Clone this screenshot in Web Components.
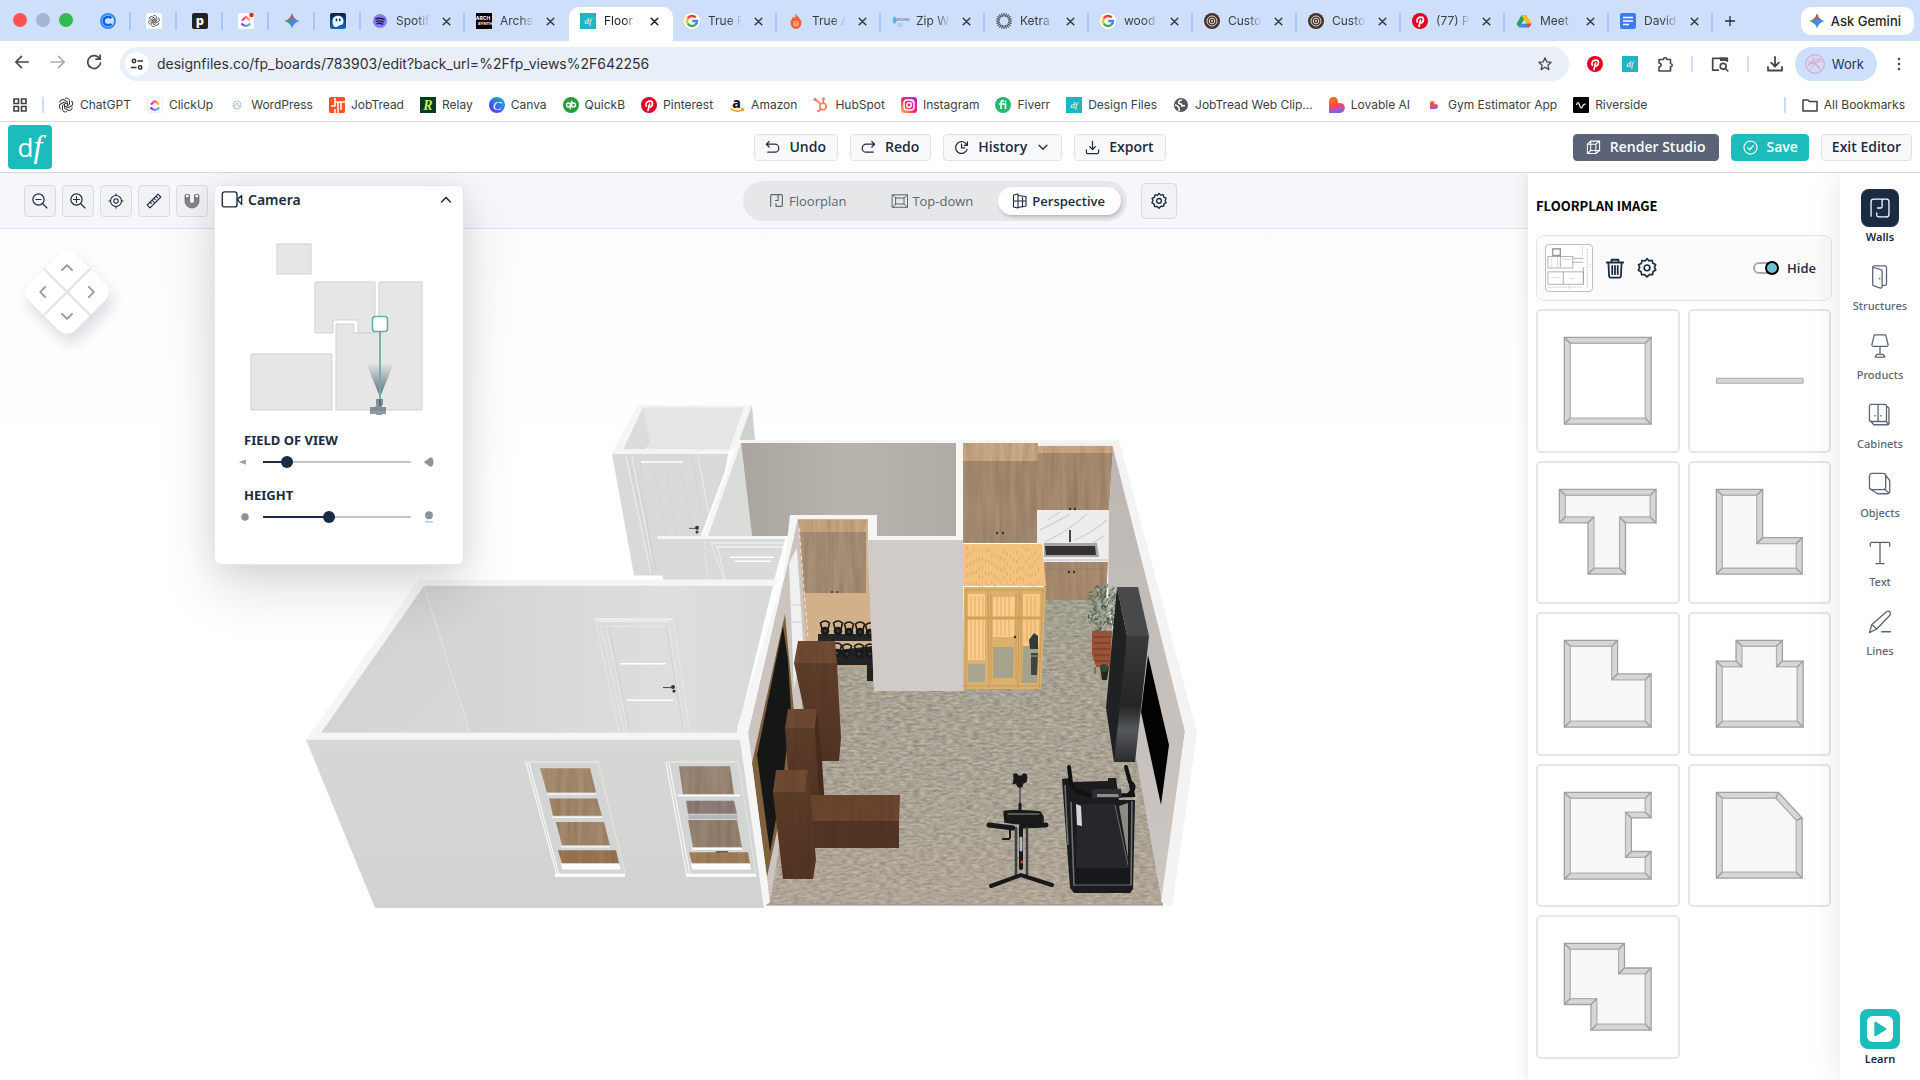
<!DOCTYPE html>
<html lang="en">
<head>
<meta charset="utf-8">
<title>Floor plan editor</title>
<style>
html,body{margin:0;height:100%}
body{font-family:"Noto Sans","Open Sans",sans-serif;color:#1b2b42;background:#fff;overflow:hidden}
editor-page{height:100vh}
</style>
</head>
<body>
<editor-page></editor-page>
<script>
const define = (tag, css, render, ready) => customElements.define(tag, class extends HTMLElement {
  connectedCallback() {
    if (this.shadowRoot) return;
    const root = this.attachShadow({ mode: 'open' });
    const t = document.createElement('template');
    t.innerHTML = `<style>*{box-sizing:border-box}button{font:inherit;color:inherit;border:0;background:none;padding:0;margin:0;cursor:pointer}a{color:inherit;text-decoration:none}${css}</style>${render(this)}`;
    root.append(t.content.cloneNode(true));
    if (ready) ready(this, root);
  }
});
const txt = (x, y, s, size, fill, extra = '') => `<text x="${x}" y="${y}" font-size="${size}" fill="${fill}" text-anchor="middle" ${extra}>${s}</text>`;
const line = (d, w = 1.5, extra = '') => `<path d="${d}" fill="none" stroke="currentColor" stroke-width="${w}" stroke-linecap="round" stroke-linejoin="round" ${extra}/>`;
const dfLogo = `<rect width="16" height="16" fill="#1fb5c3"/>${txt(8,11,'df',9,'#fff','font-family="Liberation Serif" font-style="italic"')}`;
const spark = `<linearGradient id="g" x1="0" x2="1" y1="0" y2="1"><stop offset=".1" stop-color="#34a853"/><stop offset=".4" stop-color="#4285f4"/></linearGradient><linearGradient id="h" x1="0" x2="1"><stop offset="0" stop-color="#fbbc04"/><stop offset=".2" stop-color="#34a853"/><stop offset=".5" stop-color="#34a853" stop-opacity="0"/></linearGradient><linearGradient id="k" x1="0" x2="0" y1="0" y2="1"><stop offset=".15" stop-color="#ea4335"/><stop offset=".5" stop-color="#ea4335" stop-opacity="0"/></linearGradient>`+['g','h','k'].map(i=>`<path d="M8 .5Q9.500 6.500 15.500 8Q9.500 9.500 8 15.500Q6.500 9.500 .5 8Q6.500 6.500 8 .5Z" fill="url(#${i})"/>`).join('');
const flower = `<g fill="none" stroke="#333" stroke-width="1">${[0,60,120,180,240,300].map(a=>`<path d="M7 1.500a3 3 0 0 1 4.500 2v4L8 9.800" transform="rotate(${a} 8 8)"/>`).join('')}</g>`;
const clickup = `<linearGradient id="a"><stop stop-color="#ff02f0"/><stop offset="1" stop-color="#ffc800"/></linearGradient><linearGradient id="b"><stop stop-color="#8930fd"/><stop offset="1" stop-color="#49ccf9"/></linearGradient><path d="M4 7.500L8 4l4 3.500" fill="none" stroke="url(#a)" stroke-width="2.200"/><path d="M3.500 10.500Q8 15.500 12.500 10.500" fill="none" stroke="url(#b)" stroke-width="2.200"/>`;
const target = `<circle cx="8" cy="8" r="8" fill="#44322c"/><g fill="none" stroke="#e5dbd6"><circle cx="8" cy="8" r="5"/><circle cx="8" cy="8" r="2.800"/></g><circle cx="8" cy="8" r="1" fill="#e5dbd6"/>`;
const pin = `<circle cx="8" cy="8" r="8" fill="#e60023"/><path d="M7 13.500l1.600-6.500M5.300 9C3 4.500 11.500 2 11.500 6.500c0 3.500-3 4.200-3.800 2.800" fill="none" stroke="#fff" stroke-width="1.700" stroke-linecap="round"/>`;
const heart = (k) => `<linearGradient id="l" x1=".4" x2=".6" y1="0" y2="1"><stop offset=".2" stop-color="#ff6a1a"/><stop offset=".55" stop-color="#fb3f6f"/><stop offset="1" stop-color="#5a72ff"/></linearGradient><path transform="translate(${8-8*k} ${8-8*k}) scale(${k})" d="M0 4.500C0 -1.500 9 -1.500 9 4.500V6h2c7 0 6 10 0 10H0z" fill="url(#l)"/>`;
const gear = line('M8 1.200l1.500 1.600 2.200-.4.500 2.200 2.100.900-.900 2 1 2-2 1.100-.300 2.200-2.200-.1L8 14.500l-1.700-1.700-2.200.1-.400-2.200-2-1.100 1-2-.900-2 2.100-.900.500-2.200 2.200.4z',1.200)+`<circle cx="8" cy="7.900" r="2.100" fill="none" stroke="currentColor" stroke-width="1.200"/>`;
const plan = 'M2.500 13.500V3.500a1 1 0 0 1 1-1h9a1 1 0 0 1 1 1v9a1 1 0 0 1-1 1H7.500M7.500 13.500v-2.500M9.500 2.500v5.500H7';
const ICONS = {
  calendly:`<circle cx="8" cy="8" r="7" fill="none" stroke="#2f8cff" stroke-width="2"/><path d="M11.300 5.300a4.300 4.300 0 1 0 0 5.400" fill="none" stroke="#0560ef" stroke-width="2.600"/>`,
  gptw:`<rect width="16" height="16" rx="2" fill="#fff"/><g transform="translate(1.600 1.600) scale(.8)">${flower}</g>`, gpt:flower,
  p:`<rect width="16" height="16" rx="2" fill="#222"/>${txt(8,12,'p',13,'#fff','font-weight="800" font-family="Noto Sans"')}`,
  clickdot:`<rect width="16" height="16" rx="2" fill="#fff"/>${clickup}<circle cx="13.500" cy="2" r="2.200" fill="#fb1d1d"/>`,
  clickup:`<rect x=".5" y=".5" width="15" height="15" rx="2" fill="#fff" stroke="#eee"/>${clickup}`,
  gemini:spark,
  ghost:`<linearGradient id="q" x2="0" y2="1"><stop stop-color="#072248"/><stop offset="1" stop-color="#1769bd"/></linearGradient><rect width="16" height="16" rx="2" fill="url(#q)"/><path d="M2.500 8c0-7 11-7 11 0 0 3-1 4-3 4l-4 2c-3 0-4-2-4-6z" fill="#e8f5fc"/><g fill="#12335c"><ellipse cx="6.500" cy="7" rx=".9" ry="1.400"/><ellipse cx="9.800" cy="7" rx=".9" ry="1.400"/></g>`,
  spotify:`<circle cx="8" cy="8" r="7" fill="#887bf5"/><g fill="none" stroke="#1c1a3c" stroke-linecap="round" stroke-width="1.400"><path d="M4 5.800c3-.8 6-.5 8.200.8M4.500 8.300c2.500-.7 5-.4 6.900.700M5 10.600c2-.5 4-.3 5.500.600"/></g>`,
  arch:`<rect width="16" height="16" fill="#000"/>${txt(7,7,'ARCH',5,'#fff','font-weight="700" font-family="Inter"')}${txt(9,12,'SYNTH',4,'#fff','font-weight="700" font-family="Inter"')}`,
  df:dfLogo,
  google:`<circle cx="8" cy="8" r="8" fill="#fff"/><g fill="none" stroke-width="2.400"><path d="M11.700 4.600A5 5 0 0 0 3.700 5.500" stroke="#ea4335"/><path d="M3.700 5.500a5 5 0 0 0 0 5" stroke="#fbbc04"/><path d="M3.700 10.500a5 5 0 0 0 7.500 1.300" stroke="#34a853"/><path d="M11.200 11.800A5 5 0 0 0 13 8H8.200" stroke="#4285f4"/></g>`,
  flame:`<path d="M8 0c0 3 5.500 5 5.500 10a5.500 6 0 0 1-11 0c0-3 2-4 2.500-6.500L7 5z" fill="#ee6432"/><rect x="5.500" y="8" width="5" height="5" rx="1" fill="#f8b9a1"/><path d="M6.500 9.500h3M6.500 11h3" stroke="#ee6432"/>`,
  zip:`<path d="M2.500 2.500q-4 7 0 8.500 4-1.500 0-8.500" fill="#5bb9ec"/>${txt(10,7.5,'DRONN',4,'#8490aa','font-family="Inter" font-weight="700"')}<path d="M5 10h6v4H6z" fill="#a3d4f0"/>`,
  ketra:`<g stroke="#3c4043" stroke-width="1.100">${Array.from({length:20},(_,i)=>`<path d="M8 0v3.500" transform="rotate(${i*18} 8 8)"/>`).join('')}</g>`,
  target, pinterest:pin,
  drive:`<path d="M5.500 2h5l5 9h-5z" fill="#fbbc04"/><path d="M5.500 2L8 6.500 3 14.500.5 11z" fill="#1fa463"/><path d="M5.500 10.800h10L13 14.500H3z" fill="#4285f4"/><path d="M11 10.800h4.500L13 14.500z" fill="#ea4335"/>`,
  docs:`<rect width="16" height="16" rx="2" fill="#3b7cf0"/><path d="M3 4.500h10M3 8h10M3 11.500h6" stroke="#fff" stroke-width="1.600"/>`,
  wp:`<circle cx="8" cy="8" r="4" fill="none" stroke="#9cc9dd"/><path d="M5 9l3-3 3 4" fill="none" stroke="#f0a0a0"/>`,
  jobtread:`<rect width="16" height="16" rx="1.500" fill="#ff5126"/><path d="M6 1v8H2M6 12V16M9 16V5h7M12 5v8M6 5h2" stroke="#fff" stroke-width="1.500" fill="none"/>`,
  relay:`<rect width="16" height="16" fill="#063d22"/>${txt(8,13,'R',14,'#c8ef5a','font-style="italic" font-weight="700" font-family="Liberation Serif"')}`,
  canva:`<linearGradient id="c" x1="0" y1="1" x2="1" y2="0"><stop stop-color="#6420ff"/><stop offset="1" stop-color="#00c4cc"/></linearGradient><circle cx="8" cy="8" r="8" fill="url(#c)"/>${txt(8,12.5,'C',13,'#fff','font-style="italic" font-family="Liberation Serif"')}`,
  qb:`<circle cx="8" cy="8" r="8" fill="#2b9c3f"/><g fill="none" stroke="#fff" stroke-width="1.300"><circle cx="5.500" cy="8" r="2"/><circle cx="10.500" cy="8" r="2"/><path d="M7.300 5.800v6.500M8.700 3.700v6.500"/></g>`,
  amazon:`${txt(7.5,10.5,'a',14,'#111','font-weight="800" font-family="Noto Sans"')}<path d="M1.500 11.500c4 3.500 9 3.500 12 1.200M12 11.800l2.500.2-.8 2.300" fill="none" stroke="#ff9900" stroke-width="1.500"/>`,
  hubspot:`<g fill="none" stroke="#ff7a59" stroke-width="1.600"><circle cx="10" cy="9.500" r="3.200"/><path d="M8 7L2 2.500M10.300 6V2M7.500 12L5.500 14.500"/></g><g fill="#ff7a59"><circle cx="2" cy="2.200" r="1.500"/><circle cx="10.500" cy="1.800" r="1.500"/><circle cx="5.500" cy="14" r="1.300"/></g>`,
  instagram:`<linearGradient id="i" x1="0" y1="1" x2="1" y2="0"><stop stop-color="#ffc63b"/><stop offset=".45" stop-color="#fb2667"/><stop offset="1" stop-color="#a72ce6"/></linearGradient><rect width="16" height="16" rx="3" fill="url(#i)"/><g fill="none" stroke="#fff" stroke-width="1.400"><rect x="3" y="3" width="10" height="10" rx="3"/><circle cx="8" cy="8" r="2.300"/></g><circle cx="11" cy="5" r=".8" fill="#fff"/>`,
  fiverr:`<circle cx="8" cy="8" r="8" fill="#24ba6d"/><path d="M4 7h6.500v5M6 12V6c0-2 1-2.500 3-2.300" fill="none" stroke="#fff" stroke-width="1.600"/><circle cx="10.500" cy="4.500" r=".9" fill="#fff"/>`,
  globe:`<circle cx="8" cy="8" r="7" fill="#54585d"/><path d="M9 3c-3 0-4 2-3 3.500 2 0 3 .5 3 2.500l3-.5M2 8c2 0 3 1 4 2.500V14" fill="none" stroke="#fff" stroke-width="1.600"/>`,
  heart:heart(1), heartS:heart(.5),
  riverside:`<rect width="16" height="16" rx="1" fill="#000"/><path d="M3.500 8q1.500-5 3 0t3 1.500 3-2" fill="none" stroke="#fff" stroke-width="1.200"/>`,
  close:line('M4.500 4.500l7 7M11.500 4.500l-7 7',1.600), plus:line('M8 2v12M2 8h12',1.700),
  back:line('M13.500 8H2.500M7.500 3L2.500 8l5 5',1.500), fwd:line('M2 8h11.500M8.500 3l5 5-5 5',1.500),
  reload:line('M13 5.200A5.700 5.700 0 1 0 13.700 9M13.500 1.800v3.700H9.800',1.500),
  tune:`<g fill="none" stroke="#333" stroke-width="1.500"><circle cx="5" cy="5" r="1.700"/><path d="M8.500 5H14M2 11.500h5.500"/><circle cx="11.200" cy="11.500" r="1.700"/></g>`,
  star:line('M8 1.800l1.800 4.100 4.400.4-3.300 2.900 1 4.400L8 11.300l-3.900 2.300 1-4.400L1.800 6.300l4.400-.4z',1.300),
  puzzle:line('M2 3.500h4.500a1.700 1.700 0 0 1 3.400 0H13.500V7.500a1.700 1.700 0 0 1 0 3.400V15H2V11a2 2 0 0 0 0-4z',1.600),
  lens:line('M6.500 13.500H1.500V3h13v2.500',1.500)+`<path d="M8 2.300h6.500v3H8z" fill="currentColor"/><circle cx="10.800" cy="10" r="2.600" fill="none" stroke="currentColor" stroke-width="1.500"/>`+line('M12.800 12l2.200 2.200',1.500),
  download:line('M8 1v9M4.200 6.700L8 10.500l3.800-3.800M1 11v3.500h14V11',1.800),
  avatar:`<circle cx="8" cy="8" r="7.500" fill="#dbd8f3" stroke="#b495bd" stroke-width=".6"/><path d="M2 10q6-8 12-5M4 13q5-8 9-7M3 6q6 1 9 7M6 2q1 6 6 9M2 8q8 0 10-5" fill="none" stroke="#c89ab8" stroke-width=".5"/>`,
  dots:`<g fill="currentColor"><circle cx="8" cy="3" r="1.300"/><circle cx="8" cy="8" r="1.300"/><circle cx="8" cy="13" r="1.300"/></g>`,
  apps:`<g fill="none" stroke="currentColor" stroke-width="1.600"><path d="M2 2h4.500v4.500H2zM9.500 2H14v4.500H9.500zM2 9.500h4.500V14H2zM9.500 9.500H14V14H9.500z"/></g>`,
  folder:line('M1 3h5l1.500 1.500H15V14H1z',1.500),
  undo:line('M4.500 1.500L1.500 4.500h9a4.200 4.200 0 0 1 0 8.500H3M1.500 4.500L4.500 7.500',1.300), redo:line('M11.500 1.500L14.500 4.500H5.500a4.200 4.200 0 0 0 0 8.500H13M14.500 4.500L11.500 7.500',1.300),
  history:line('M13.800 5.500A6.300 6.300 0 1 0 14 10M14.300 2v3.700h-3.500M8 4.500V8.500h3.500',1.300), down:line('M3.500 6L8 10.500 12.500 6',1.500), up:line('M3.500 10L8 5.500 12.500 10',1.500),
  left:line('M10 3.500L5.500 8l4.500 4.500',1.500), right:line('M6 3.500l4.500 4.500L6 12.500',1.500),
  export:line('M8 1.500v8.500M5 7.200L8 10.200l3-3M1.500 10.500v2.500a1.500 1.500 0 0 0 1.500 1.500h10a1.500 1.500 0 0 0 1.500-1.500v-2.500',1.300),
  cube:line('M1.500 4.500h9v10h-9zM5 1.200h9.500v10H5zM1.500 4.500L5 1.200M10.500 4.500l4-3.300M1.500 14.500L5 11.200M10.500 14.500l4-3.300',1.100),
  check:`<circle cx="8" cy="8" r="7" fill="none" stroke="currentColor" stroke-width="1.200"/>`+line('M5 8.200l2.200 2.200L11 6',1.300),
  zoomout:line('M11 11l4 4M4 6.500h5',1.100)+`<circle cx="6.500" cy="6.500" r="5.600" fill="none" stroke="currentColor" stroke-width="1.200"/>`,
  zoomin:line('M11 11l4 4M3.500 6.500h6M6.500 3.500v6',1.100)+`<circle cx="6.500" cy="6.500" r="5.600" fill="none" stroke="currentColor" stroke-width="1.200"/>`,
  center:`<g fill="none" stroke="currentColor" stroke-width="1.100"><circle cx="8" cy="8" r="5.500"/><circle cx="8" cy="8" r="2.200"/><path d="M8 .5v2.500M8 13v2.500M.5 8H3M13 8h2.500"/></g>`,
  ruler:line('M1.200 12L12 1.200 14.800 4 4 14.800zM4 9.200l1.300 1.300M6 7.200l2 2M8 5.200l1.300 1.300M10 3.200l1.500 1.500',1.100),
  magnet:`<path d="M1 2v6a7 7 0 0 0 14 0V2h-4.500v6a2.500 2.500 0 0 1-5 0V2z" fill="#858585" stroke="#666" stroke-width=".7"/><path d="M1.500 1.500H5v3H1.500zM11 1.500h3.500v3H11z" fill="#fff" stroke="#666" stroke-width=".7"/>`,
  plan:line(plan,1.100),
  topdown:line('M.5 1.800h15v12.500H.5zM4 5h8v6H4zM.5 1.800L4 5M15.500 1.800L12 5M.5 14.300L4 11M15.500 14.300L12 11',1),
  persp:line('M1.500 2l4.500-1v14l-4.500-1zM6 2.500l8 1v9.500l-8 1.500M10.500 3v11M1.500 8H14',1.100),
  camera:line('M3 1.500h8a1.800 1.800 0 0 1 1.800 1.800v8.400A1.800 1.800 0 0 1 11 13.500H2.800A1.800 1.800 0 0 1 1 11.700V3.300a1.800 1.800 0 0 1 1.800-1.800M13 7.500l3.500-3v7z',1.100),
  gear,
  trash:line('M2 4h12M3.200 4l.5 9.800a1.200 1.200 0 0 0 1.200 1.200h6.200a1.200 1.200 0 0 0 1.200-1.200L12.800 4M5.500 3.500V2h5v1.500M6 6.500v6M8 6.500v6M10 6.500v6',1.300),
  fovS:`<path d="M1 8l8-3v6z" fill="#98a0aa"/>`, fovL:`<path d="M1 8L10 1.500q4 1 4 6.500t-4 6.500z" fill="#8a939e"/>`,
  dotG:`<circle cx="8" cy="8" r="5" fill="#8a939e"/>`, person:`<circle cx="8" cy="6" r="4.500" fill="#8a939e"/><path d="M3.500 13.500h9" stroke="#b9bfc6" stroke-width="1.500"/>`,
  walls:line('M2.500 13V4a1.500 1.500 0 0 1 1.500-1.500h8A1.500 1.500 0 0 1 13.500 4v8a1.500 1.500 0 0 1-1.500 1.500H7a1.200 1.200 0 0 1-1-1.200V11M6.500 8H8.300a1 1 0 0 0 1-1V2.500',.8),
  structures:line('M3.500 2.200a1 1 0 0 1 1-1h6.500a1 1 0 0 1 1 1v10a1 1 0 0 1-1 1H9.500M3.500 2L8.500 3.500a1 1 0 0 1 .8 1v9.500a.8.8 0 0 1-1 .8L4.200 13.500a1 1 0 0 1-.7-1z',.8)+`<circle cx="7.800" cy="9" r=".5" fill="currentColor"/>`,
  products:line('M4.500 1.200h7l1.500 6a1 1 0 0 1-1 1H4a1 1 0 0 1-1-1zM8 8.200v5M6 13.200h4l1 1.600H5z',.8),
  cabinets:line('M1.500 2.500a1 1 0 0 1 1-1h8.500a1 1 0 0 1 1 1v8.500a1 1 0 0 1-1 1H2.500a1 1 0 0 1-1-1zM6.800 1.500v10.500M12 2.500l1.500 1.200V13a1 1 0 0 1-1 1H4.200l-2-2.300M11.700 11.700l1.500 2',.8)+`<circle cx="5" cy="8.500" r=".5" fill="currentColor"/><circle cx="8.600" cy="8.500" r=".5" fill="currentColor"/>`,
  objects:line('M1.500 3a1.500 1.500 0 0 1 1.500-1.500h7A1.500 1.500 0 0 1 11.500 3v7A1.500 1.500 0 0 1 10 11.500H3A1.500 1.500 0 0 1 1.500 10zM11.500 2.500l2.500 3.500v6.500a1.500 1.500 0 0 1-1.500 1.500H6.500L2.200 11.200M11 11.200l2.500 2.400',.8),
  text:line('M2 3.800V2.500a1 1 0 0 1 1-1h10a1 1 0 0 1 1 1v1.300M8 1.500v13M5.500 14.500h5',.8),
  lines:line('M1.500 14.500l1.500-5L12 1.700a1.500 1.500 0 0 1 2.200 2L6 12.300zM3 9.500l3 2.800M9 14h5.500',.8),
  learn:`<rect width="16" height="16" rx="3.500" fill="#fff"/><path d="M5 4v8l6.500-4z" fill="#1cbbbc" stroke="#1cbbbc" stroke-linejoin="round"/>`
};
define('ui-icon', `:host{display:inline-flex;flex:none}svg{display:block;overflow:visible}`, el => {
  const s = el.getAttribute('size') || 16;
  return `<svg width="${s}" height="${s}" viewBox="0 0 16 16" aria-hidden="true">${ICONS[el.getAttribute('name')] || ''}</svg>`;
});
const ic = (n, s = 16) => `<ui-icon name="${n}" size="${s}"></ui-icon>`;

/* ---- browser chrome ---- */
define('pinned-tab', `:host{display:flex;box-sizing:border-box;align-items:center;width:46px;height:18px;padding-left:2px;border-right:2px solid #a5c6fa}button{display:flex;width:100%;justify-content:center}`,
  el => `<button aria-label="${el.getAttribute('icon')}">${ic(el.getAttribute('icon'))}</button>`);
define('browser-tab', `:host{display:flex;box-sizing:border-box;position:relative;align-items:center;width:104px;height:34px;padding:0 11px 6px;color:#3c4043}
:host([active]){background:#fff;border-radius:10px 10px 0 0;color:#1f1f1f}
:host(:not([plain]))::after{content:"";position:absolute;right:0;top:6px;height:18px;width:2px;background:#a5c6fa}
.t{display:flex;flex:1;min-width:0;gap:8px;align-items:center}
span{flex:1;text-align:left;white-space:nowrap;overflow:hidden;font-size:12px;line-height:16px;-webkit-mask:linear-gradient(90deg,#000 60%,transparent)}.x{display:flex;margin-left:9px}`,
  el => `<button class="t">${ic(el.getAttribute('icon'))}<span><slot></slot></span></button><button class="x" aria-label="Close">${ic('close',15)}</button>`);
define('tab-strip', `:host{display:flex;box-sizing:border-box;height:41px;padding:7px 6px 0 13px;background:#cddffb;font-family:Inter,sans-serif}
.lights{display:flex;gap:9px;padding-top:6px;width:72px}.lights i{width:14px;height:14px;border-radius:50%;background:#fe5152}.lights i:nth-child(2){background:#a2b4d2}.lights i:nth-child(3){background:#31bb51}
.pins{display:flex;padding-top:5px}.new{display:flex;height:28px;width:34px;align-items:center;justify-content:center}
.ask{display:flex;margin-left:auto;height:28px;border-radius:10px;background:#fff;align-items:center;gap:6px;padding:0 13px 0 8px;font-size:13px;font-weight:500;color:#1f1f1f}`,
  () => `<div class="lights"><i></i><i></i><i></i></div><div class="pins">${['calendly','gptw','p','clickdot','gemini','ghost'].map(n=>`<pinned-tab icon="${n}"></pinned-tab>`).join('')}</div>
  ${[['spotify','Spotify'],['arch','Archsy','plain'],['df','Floor P','active plain'],['google','True R'],['flame','True A'],['zip','Zip Wa'],['ketra','Ketra'],['google','wood'],['target','Custom'],['target','Custom'],['pinterest','(77) Pi'],['drive','Meet |'],['docs','David']].map(([i,t,a=''])=>`<browser-tab icon="${i}" ${a}>${t}</browser-tab>`).join('')}
  <button class="new" aria-label="New tab">${ic('plus',12)}</button><button class="ask">${ic('gemini')}Ask Gemini</button>`);
define('address-bar', `:host{display:flex;box-sizing:border-box;align-items:center;height:47px;padding:0 13px 2px 13px;color:#474747;font-family:Inter,sans-serif;background:#fff}
.nav{display:flex;gap:18px;width:107px}.nav button:nth-child(2){opacity:.45}
.box{display:flex;align-items:center;flex:1;height:34px;border-radius:17px;background:#e9eff9;padding:0 16px 0 5px}
.site{display:flex;width:24px;height:24px;border-radius:50%;background:#fff;align-items:center;justify-content:center}
input{flex:1;min-width:0;border:0;background:none;font:14px/20px Inter,sans-serif;color:#303236;padding:0 8px;outline:0}
.ext{display:flex;align-items:center;gap:19px;padding-left:18px}.sep{width:2px;height:16px;background:#c8dcfb;margin:0 -1px}
.ext button{display:flex}.ext .work{height:34px;border-radius:17px;background:#cddffb;align-items:center;gap:7px;padding:0 13px 0 10px;font-size:13px;color:#22375f;margin:0 -5px 0 -7px}`,
  () => `<div class="nav"><button aria-label="Back">${ic('back',18)}</button><button aria-label="Forward">${ic('fwd',18)}</button><button aria-label="Reload">${ic('reload',18)}</button></div>
  <div class="box"><span class="site">${ic('tune')}</span><input aria-label="Address" value="designfiles.co/fp_boards/783903/edit?back_url=%2Ffp_views%2F642256">${ic('star')}</div>
  <div class="ext"><button aria-label="Pinterest">${ic('pinterest')}</button><button aria-label="DesignFiles">${ic('df')}</button><button aria-label="Extensions">${ic('puzzle')}</button><i class="sep"></i><button aria-label="Lens">${ic('lens',18)}</button><i class="sep"></i><button aria-label="Downloads">${ic('download')}</button><button class="work">${ic('avatar',20)}Work</button><button aria-label="More">${ic('dots')}</button></div>`);
define('book-mark', `:host{display:flex}a{display:flex;align-items:center;gap:6px;font-size:12px;line-height:16px;white-space:nowrap}`,
  el => `<a href="#">${ic(el.getAttribute('icon'))}<slot></slot></a>`);
define('bookmarks-bar', `:host{display:flex;box-sizing:border-box;align-items:center;height:34px;padding:0 15px 0 12px;border-bottom:1px solid #d9dbde;background:#fff;color:#3c4043;font-family:Inter,sans-serif}
.list{display:flex;gap:16px;padding-left:14px}.sep{width:2px;height:16px;background:#c8dcfb;margin-left:14px}.all{margin-left:auto;display:flex;gap:16px;align-items:center}`,
  () => `${ic('apps')}<i class="sep"></i><div class="list">${[['gpt','ChatGPT'],['clickup','ClickUp'],['wp','WordPress'],['jobtread','JobTread'],['relay','Relay'],['canva','Canva'],['qb','QuickB'],['pinterest','Pinterest'],['amazon','Amazon'],['hubspot','HubSpot'],['instagram','Instagram'],['fiverr','Fiverr'],['df','Design Files'],['globe','JobTread Web Clip...'],['heart','Lovable AI'],['heartS','Gym Estimator App'],['riverside','Riverside']].map(([i,t])=>`<book-mark icon="${i}">${t}</book-mark>`).join('')}</div><div class="all"><i class="sep"></i><book-mark icon="folder">All Bookmarks</book-mark></div>`);

/* ---- editor header ---- */
define('app-button', `:host{display:flex}button{display:flex;align-items:center;gap:9px;height:27px;padding:0 11px 0 10px;border:1px solid #dfe1e4;border-radius:4px;background:#f9f9fa;font-size:14px;line-height:20px;font-weight:600;white-space:nowrap}
:host([tone=dark]) button{background:#5a6377;border-color:#5a6377;color:#fff;gap:9px;padding:0 13px 0 12px}:host([tone=teal]) button{background:#1cbbbc;border-color:#1cbbbc;color:#fff;gap:8px;padding:0 10px 0 11px}:host([tone=plain]) button{padding:0 10px}`,
  el => { const a = n => el.getAttribute(n); return `<button>${a('icon')?ic(a('icon'),15):''}<slot></slot>${a('after')?ic(a('after'),14):''}</button>`; });
define('app-header', `:host{display:grid;box-sizing:border-box;grid-template-columns:1fr auto 1fr;align-items:center;height:51px;padding:0 8px;background:#fff;border-bottom:1px solid #d3d7dc;font-family:"Open Sans",sans-serif}
.logo{display:block;width:44px;height:44px;border-radius:4px;background:#1cbbbc;color:#fff;text-align:center;font:500 26px/42px "Open Sans",sans-serif}.logo i{font-family:"Liberation Serif",serif;font-size:32px}
div{display:flex;gap:12px}.r{justify-content:flex-end}`,
  () => `<a class="logo" href="#">d<i>f</i></a><div><app-button icon="undo">Undo</app-button><app-button icon="redo">Redo</app-button><app-button icon="history" after="down">History</app-button><app-button icon="export">Export</app-button></div>
  <div class="r"><app-button tone="dark" icon="cube">Render Studio</app-button><app-button tone="teal" icon="check">Save</app-button><app-button tone="plain">Exit Editor</app-button></div>`);

/* ---- canvas toolbar ---- */
define('tool-button', `:host{display:flex}button{display:flex;width:32px;height:32px;align-items:center;justify-content:center;border:1px solid #d8dbdf;border-radius:4px;background:#f1f2f4}:host([large]) button{width:36px;height:36px}`,
  el => `<button aria-label="${el.getAttribute('icon')}">${ic(el.getAttribute('icon'), el.hasAttribute('large')?18:16)}</button>`);
define('view-switch', `:host{display:flex;box-sizing:border-box;height:40px;padding:6px;border-radius:20px;background:#e6e7e9;font-family:"Open Sans",sans-serif;font-size:13px;line-height:18px;font-weight:500;color:#5b6676}
button{display:flex;align-items:center;gap:4px;height:28px;border-radius:14px;padding:0 19px}button:nth-of-type(2){padding:0 25px 0 27px}button[aria-pressed=true]{background:#fff;color:#1b2b42;font-weight:600;box-shadow:1px 2px 3px #0003;padding:0 16px 0 14px}`,
  () => `<button>${ic('plan',17)}Floorplan</button><button>${ic('topdown')}Top-down</button><button aria-pressed="true">${ic('persp')}Perspective</button>`);
define('range-row', `:host{display:block;padding:0 24px 0 20px}label{display:block;padding-left:9px;font-size:13px;line-height:18px;font-weight:700}
div{display:flex;align-items:center;gap:8px;height:18px;margin-top:4px}ui-icon{width:20px;justify-content:center}
input{appearance:none;-webkit-appearance:none;flex:1;min-width:0;height:18px;margin:0;background:linear-gradient(90deg,#1b2b42 var(--p),#c3c3c3 var(--p)) center/100% 2px no-repeat}
input::-webkit-slider-thumb{-webkit-appearance:none;width:12px;height:12px;border-radius:50%;background:#1b2b42}`,
  el => `<label for="r"><slot></slot></label><div>${ic(el.getAttribute('from'),el.getAttribute('from')=='dotG'?12:14)}<input id="r" type="range" value="${el.getAttribute('value')}" style="--p:${el.getAttribute('value')}%">${ic(el.getAttribute('to'),el.getAttribute('to')=='person'?14:12)}</div>`);
define('camera-panel', `:host{display:block;box-sizing:border-box;border-radius:6px;background:#fff;border:1px solid #e5e7ea;box-shadow:0 24px 56px #0002,0 4px 30px #00000012;padding-bottom:38px}
header{display:flex;align-items:center;height:30px;padding:0 9px 2px 6px;gap:7px;font-size:14px;line-height:20px;font-weight:600}header button{display:flex;margin-left:auto}
svg{display:block;width:100%}range-row{margin-top:9px}range-row+range-row{margin-top:15px}`,
  () => `<header>${ic('camera',20)}Camera<button aria-label="Collapse">${ic('up')}</button></header>
  <svg viewBox="215 216 248 206"><defs><linearGradient id="c" x2="0" y2="1"><stop stop-color="#1b2b42" stop-opacity="0"/><stop offset="1" stop-color="#1b2b42" stop-opacity=".7"/></linearGradient></defs>
  <g fill="#e6e6e6" stroke="#d0d0d0"><path d="M277 244h34v30h-34zM315 282h60v51h-17v-13h-25v13h-18zM251 354h81v56h-81z"/><path d="M379 282h43v128h-86v-86h18v9h25z"/></g>
  <path d="M366 363h28l-14 34z" fill="url(#c)"/><path d="M380 332v74" stroke="#63b3aa" stroke-width="2" opacity=".9"/><rect x="372.500" y="316.500" width="15" height="15" rx="3" fill="#fff" stroke="#5fb0a8" stroke-width="1.600"/><path d="M376 399h7v6h-1v2h4v7h-4v1h-6v-1h-6v-7h5l2-2h-1z" fill="#1b2b42" opacity=".48"/></svg>
  <range-row value="13" from="fovS" to="fovL">FIELD OF VIEW</range-row><range-row value="44" from="dotG" to="person">HEIGHT</range-row>`);
define('canvas-toolbar', `:host{display:grid;box-sizing:border-box;grid-template-columns:1fr auto 1fr;align-items:center;position:relative;z-index:1;height:56px;padding:0 24px;background:#f6f7fa;border-bottom:1px solid #dfe2e5}
div{display:flex;align-items:center;gap:6px}.m{gap:14px}camera-panel{position:absolute;left:214px;top:12px;width:250px}`,
  () => `<div>${['zoomout','zoomin','center','ruler','magnet'].map(n=>`<tool-button icon="${n}"></tool-button>`).join('')}</div><div class="m"><view-switch></view-switch><tool-button large icon="gear"></tool-button></div><camera-panel></camera-panel>`);

/* ---- 3D scene ---- */
const pg = (pts, fill, extra = '') => `<polygon points="${pts}" fill="${fill}" ${extra}/>`;
const ln = (d, c, w = 1, e = '') => `<path d="${d}" fill="none" stroke="${c}" stroke-width="${w}" ${e}/>`;
const bell = (x, y) => `<path d="M${x-3} ${y-2}l-1.500-6q4.500-4 9 0l-1.500 6" fill="none" stroke="#16181a" stroke-width="1.600"/><circle cx="${x}" cy="${y}" r="4.300" fill="#17191a"/><circle cx="${x}" cy="${y}" r="1.400" fill="#3b3d3f"/>`;
const leaves = () => { let s = '', k = 7; const r = () => (k = (k * 16807) % 2147483647) / 2147483647;
  for (let i = 0; i < 190; i++) { const a = r() * 6.28, d = Math.sqrt(r()), x = 1102 + Math.cos(a) * 15 * d + (r() - .3) * 8, y = 611 + Math.sin(a) * 26 * d; s += `<ellipse cx="${x.toFixed(1)}" cy="${y.toFixed(1)}" rx="2.200" ry=".9" transform="rotate(${(r()*180)|0} ${x.toFixed(1)} ${y.toFixed(1)})" fill="${['#64735f','#8b978a','#4e5c50','#a9b3a8','#75836f'][i%5]}"/>`; } return s; };
const scene = () => `<svg viewBox="0 229 1528 851" preserveAspectRatio="xMidYMid meet" role="img" aria-label="Perspective view of the gym">
<defs>
<filter id="carpet" x="0" y="0" width="100%" height="100%" color-interpolation-filters="sRGB"><feTurbulence type="fractalNoise" baseFrequency=".15 .42" numOctaves="3" seed="4" result="n"/><feColorMatrix in="n" values=".36 .06 0 0 .45  .34 .07 0 0 .43  .32 0 .08 0 .38  0 0 0 0 1" result="c"/><feComposite in="c" in2="SourceGraphic" operator="in"/></filter>
<filter id="grain" x="0" y="0" width="100%" height="100%" color-interpolation-filters="sRGB"><feTurbulence type="fractalNoise" baseFrequency=".18 .015" numOctaves="3" seed="2" result="n"/><feColorMatrix in="n" values="0 0 0 0 .2  0 0 0 0 .13  0 0 0 0 .06  .3 0 0 0 -.09" result="c"/><feComposite in="c" in2="SourceGraphic" operator="in" result="d"/><feMerge><feMergeNode in="SourceGraphic"/><feMergeNode in="d"/></feMerge></filter>
<linearGradient id="tone" x2="0" y2="1"><stop stop-color="#8f977e" stop-opacity=".25"/><stop offset=".5" stop-color="#a8a292" stop-opacity=".12"/><stop offset="1" stop-color="#c0aa9c" stop-opacity=".35"/></linearGradient>
<linearGradient id="lw" x2="1" y2="1"><stop stop-color="#cfd0ce"/><stop offset="1" stop-color="#d8dad8"/></linearGradient>
<linearGradient id="bw" x2="1" y2="0"><stop stop-color="#d3d4d2"/><stop offset=".7" stop-color="#dddfdd"/><stop offset="1" stop-color="#d8dad8"/></linearGradient>
<linearGradient id="fw" x2="0" y2="1"><stop stop-color="#d5d8d5"/><stop offset="1" stop-color="#d1d3d0"/></linearGradient>
<linearGradient id="walnut" x2="0" y2="1"><stop stop-color="#5f3f2b"/><stop offset="1" stop-color="#523423"/></linearGradient>
<linearGradient id="blk" x2="0" y2="1"><stop stop-color="#383a3b"/><stop offset=".55" stop-color="#232526"/><stop offset=".75" stop-color="#55585a"/><stop offset="1" stop-color="#2a2b2d"/></linearGradient>
<linearGradient id="taupe"><stop stop-color="#aaa59f"/><stop offset=".5" stop-color="#b8b3ac"/><stop offset="1" stop-color="#b0aba5"/></linearGradient>
<linearGradient id="rw" x2="0" y2="1"><stop stop-color="#bdb7b3"/><stop offset="1" stop-color="#ccc7c3"/></linearGradient>
</defs>
<g transform="matrix(1 0 0 1.014 0 -5.5)">${pg('638,404 752,405 744,440 727,452 612,452','#f5f5f5')}${pg('643,407 744,407 729,449 650,449 645,441','#e4e6e4')}${pg('643,407 650,443 645,449 623,449','#dbdddb')}${pg('752,405 755,440 739,440','#cfd1cf')}
${pg('612,453 728,453 725,470 700,536 663,536 664,573 634,573','#d8dad8')}${ln('M623 449h74M628 452h66','#f2f2f2',1.500)}${ln('M697 449l12 64M626 455l25 116M632 455l22 115','#e9eae9',1.200)}${ln('M629 458l24 112M634 458l22 110','#c9cbc9',.6)}${ln('M641 461h42','#fff',1.500)}${ln('M640 460l14 110M654 465l12 70M666 465l10 70M680 465l12 60M692 456l10 60','#cfd1cf',.7)}${ln('M689 526.500h8','#555',1)}<circle cx="697" cy="526" r="2" fill="#3b3335"/><circle cx="697" cy="530" r="1.500" fill="#3b3335"/></g>
${pg('739,440 1119,440 1119,443 741,443 708,536 702,538','#f5f5f5')}${pg('741,443 752,536 708,536','#dadcda')}${pg('741,443 956,443 956,536 752,536','url(#taupe)')}
<g transform="matrix(1 0 0 1.014 0 -5.5)">
${pg('657,534 786,534 774,578 663,578','#d9dbd9')}${pg('657,534 786,534 786,537 658,537','#f5f5f5')}${ln('M711 541h73M716 545h67','#f0f0f0',1.500)}${ln('M711 541l13 36M718 546l7 31','#ebebeb',1)}${ln('M730 555h44M735 559h36','#fff',1.500)}${ln('M704 540l4 37','#eee',.8,'stroke-dasharray="3 2"')}
${pg('419,577 783,577 773,583 424,583 321,728 741,728 741,735 306,735','#f5f5f5')}${pg('424,583 773,583 737,728 470,728','url(#bw)')}${pg('424,583 470,728 321,728','url(#lw)')}${ln('M424 583l46 145','#eee',1,'stroke-dasharray="1 2"')}
${pg('306,735 741,735 764,901 375,901','url(#fw)')}
${ln('M595 616h78M598 618h72','#f6f6f6',1)}${ln('M603 623h67M595 616l24 111M600 618l24 109M606 623l22 104M673 616l17 111M669 623l16 104','#e9eae9',.8)}${ln('M609 623l21 104M666 623l18 104','#cccecc',.8)}${ln('M620 660h46M627 696h46','#fff',1.300)}${ln('M663 683.500h9','#544',1)}<circle cx="673" cy="683" r="2" fill="#3b3335"/><circle cx="674" cy="687" r="1.600" fill="#3b3335"/>
${pg('526,757 598,757 624,867 555,867','#d2d5d3')}${ln('M526 757h72','#eee',1)}${ln('M526 757l31 112M529 758l30 110','#f5f6f5',1.300)}${ln('M598 757l27 110','#e8e9e8',.8)}
<g filter="url(#grain)">${pg('540,763 590,763 596,787 547,787','#a98d70')}${pg('549,793 597,793 602,810 553,810','#a78a6c')}${pg('556,816 604,816 610,839 562,839','#a6896c')}${pg('558,844 616,844 619,857 562,857','#9a7855')}</g>
${ln('M547 788.500h49M552 811.500h50M561 840.500h49','#f4f4f4',1.500)}${pg('561,857 619,857 621,863 562,863','#fdfdfd')}${pg('555,867 625,867 625,870 555,870','#fff')}
${pg('666,757 738,757 756,867 687,867','#d2d5d3')}${ln('M666 757h72','#eee',1)}${ln('M666 757l21 112M669 758l21 110','#f5f6f5',1.300)}${ln('M738 757l18 110','#e8e9e8',.8)}
<g filter="url(#grain)">${pg('679,761 730,761 734,789 683,789','#9c8877')}${pg('686,795 734,795 737,808 688,808','#8f8179')}${pg('688,814 737,814 742,841 693,841','#978574')}${pg('689,846 748,846 750,857 692,857','#a1805d')}</g>${pg('688,809 737,809 738,813 689,813','#b5b6b7')}
${ln('M678 790h62M692 842.500h50','#fff',2)}${ln('M716 845.500h12','#555',1.500)}${pg('691,857 750,857 751,863 692,863','#fdfdfd')}${pg('686,867 756,867 756,870 686,870','#fff')}</g>
<g>${pg('803,640 850,600 950,660 1030,600 1106,600 1142,757 1163,905 766,905','#aaa','filter="url(#carpet)"')}${pg('803,640 850,600 950,660 1030,600 1106,600 1142,757 1163,905 766,905','url(#tone)')}</g>
${pg('798,519 812,640 792,770 770,902 748,733','#cbc4c0')}${pg('789,563 797,548 803,640 794,690','#eff1f1')}${ln('M790 605h11M792 622h11','#d5dada',1.500)}
${pg('785,614 794,712 786,790 767,877 752,763','#80603a')}${pg('783,626 788,660 791,712 783,780 770,852 757,755','#151616')}
${pg('798,519 868,519 873,666 808,667','#d2b08a')}<g filter="url(#grain)">${pg('798,520 867,520 864,532 801,532','#cba883')}${pg('800,532 866,532 866,593 804,593','#a89077')}</g>${ln('M833 532v61','#94806a',.7)}<circle cx="832" cy="592" r="1" fill="#333"/><circle cx="837" cy="592" r="1" fill="#333"/>${ln('M799 528l9 110','#efe7dc',1,'stroke-dasharray="4 3"')}
${pg('818,634 872,634 873,641 818,641','#232526')}${pg('820,652 873,646 873,665 820,665','#202223')}${pg('820,665 873,665 873,668 820,668','#c79e77')}${pg('867,665 873,665 873,681 867,681','#222')}${[[825,631],[838,631],[849,632],[860,632],[870,633],[837,653],[847,654],[859,654],[870,654]].map(b=>bell(...b)).join('')}
${pg('790,515 877,515 877,536 963,536 963,540 868,540 868,519 798,519 748,733 770,902 764,908 740,740 737,728 783,578','#f5f5f5')}
${pg('867,540 963,540 964,691 874,691','#d1cbc7')}${pg('956,443 963,443 963,540 956,540','#f7f7f7')}
<g filter="url(#grain)">${pg('963,443 1038,443 1038,461 963,461','#cbaa86')}${pg('963,461 1038,461 1037,543 963,543','#a78d72')}${pg('1038,446 1113,446 1113,453 1038,453','#cda985')}${pg('1038,453 1113,453 1109,510 1037,510','#a88d72')}${pg('1044,561 1108,561 1106,600 1044,600','#ab8e72')}</g>
${ln('M1001 461v82M1075 453v57M1045 569h62','#927a62',.7)}${pg('1040,443 1113,443 1113,446 1040,446','#eee')}
${pg('1037,510 1109,510 1108,562 1044,562 1037,543','#eeecec')}${ln('M1040 530q20-10 30-16M1045 542q25-12 42-28M1075 540q15-6 32-20M1048 520l12-8M1090 545l14-9','#d6d3d5',1.500)}${pg('1044,543 1097,543 1099,557 1044,557','#a4a5a8')}${pg('1045,546 1095,546 1096,555 1046,555','#35312f')}${ln('M1070 530v12','#444',2)}${ln('M1044 560h64','#d6d6d8',2)}
${[[997,533],[1003,533],[1070,509],[1075,509],[1069,572],[1074,572]].map(([x,y])=>`<circle cx="${x}" cy="${y}" r="1.200" fill="#333"/>`).join('')}
${pg('963,544 1042,544 1046,586 963,586','#f3c27f')}<g>${Array.from({length:24},(_,i)=>ln(`M${967+i*3.1} ${546+(i*7)%6}v38`,'#d9a35c',.7,`stroke-dasharray="4 ${5+i%4}" stroke-dashoffset="${i*5}"`)).join('')}</g>
${pg('964,587 1046,587 1041,689 963,689','#dcb06d')}${pg('968,594 985,594 985,660 968,660','#fbcd8a')}${pg('993,597 1015,597 1014,637 993,637','#fbcd8a')}${pg('1023,594 1040,594 1039,646 1023,646','#f8c884')}
${[971,975,979,983,997,1001,1005,1009,1027,1031,1035].map(x=>ln(`M${x} 596v${x<990?63:x<1015?40:46}`,'#daa661',.8)).join('')}${ln('M966 618h75','#d0a05c',3)}
${pg('968,664 985,664 985,682 968,682','#aba78f')}${pg('993,647 1014,647 1013,678 993,678','#a6a28c')}${pg('1023,646 1038,646 1037,683 1022,683','#a5a28b')}${pg('1029,640 1034,633 1038,636 1038,649 1030,649','#333839')}${pg('1031,653 1038,653 1037,675 1031,675','#3e4445')}${ln('M1028 656h12M964 590h81M963 686h78M988 590l1 98M1019 590l-1 98M966 590v98M1043 590l-4 98M991 593v88M1016 593v88M1021 593v90','#c79a55',1)}<circle cx="1015" cy="637" r="1.300" fill="#333"/>
${pg('1113,444 1185,731 1162,903 1136,757 1108,600 1109,510','url(#rw)')}${pg('1113,440 1119,440 1197,733 1172,907 1161,902 1185,731 1112,444','#f3f3f3')}
${leaves()}${pg('1092,631 1112,631 1110,667 1096,667 1092,655','#9a5238')}${ln('M1093 637h18M1093 643h18M1092 649h18M1094 655h16M1095 661h15M1095 667v7','#6e3825',1)}${pg('1100,667 1109,667 1107,680 1102,680','#1d2a1d')}<circle cx="1104" cy="668" r="4" fill="#33492f"/>
${pg('1148,655 1169,745 1161,805 1141,712','#030303')}${pg('1117,587 1127,636 1120,762 1114,762 1106,708','#1f2122')}${pg('1117,587 1138,587 1149,636 1127,636','#47494a')}${pg('1127,636 1149,636 1135,762 1114,762','url(#blk)')}
<g filter="url(#grain)">${pg('794,663 837,663 841,738 839,761 815,761','url(#walnut)')}${pg('798,641 835,641 837,663 794,663','#724b34')}${pg('785,728 815,728 820,745 824,795 790,795','url(#walnut)')}${pg('788,709 817,709 815,728 785,728','#724b34')}${pg('817,709 822,760 824,795 819,795 815,728','#482b1c')}
${pg('810,821 899,821 899,848 812,848','#533525')}${pg('810,795 900,795 899,821 810,821','#6b4630')}${pg('773,792 805,792 809,775 816,860 813,879 783,879','url(#walnut)')}${pg('776,770 808,770 805,792 773,792','#724b34')}</g>
<g fill="none" stroke="#17181a" stroke-linecap="round"><path d="M1020 785v28" stroke="#555" stroke-width="1.500"/><path d="M1020 804v9" stroke-width="3"/><path d="M1014 774h3l1 2h4l1-2h3l1 4-1 4-3 1-1 4h-4l-2-4-3 1 1-5z" fill="#1c1a19" stroke-width="1"/><path d="M1004 812q3-3 36 0l3 5v5q-18 4-38 0z" fill="#1a1a1b" stroke-width="1.500"/><path d="M1008 814h31" stroke="#97908c"/><path d="M989 825l24 3M1022 826l24-1" stroke-width="5"/><path d="M1016 828v47M1027 828v47" stroke="#3c4043" stroke-width="2.500"/><path d="M1021 826v42" stroke-width="4"/><path d="M1021 838v12" stroke="#b7babd" stroke-width="3"/><path d="M1003 839h6M1010 830v8" stroke-width="2"/><path d="M991 886l30-11 31 10" stroke-width="4"/></g><circle cx="1022" cy="862" r="1.500" fill="#a5582a"/>
<g>${pg('1062,779 1069,778 1072,782 1108,781 1108,778 1116,778 1119,800 1135,800 1133,889 1130,893 1074,893 1070,888','#1b1c1e')}${pg('1077,804 1115,804 1129,868 1076,868','#26272a')}${pg('1119,806 1128,803 1128,858','#8d8a83')}${pg('1076,868 1129,868 1132,885 1073,885','#17181a')}${ln('M1071 802l3 84M1132 801l-1 84M1065 785l3 60','#6e7275',1.500)}${ln('M1115 805l13 60M1075 885h57','#6a6d70',1)}${ln('M1069 767l2 16q4 12 28 13l34-1-2-10M1126 767l4 15q8 5-2 13','#111214',4,'stroke-linecap="round"')}${pg('1092,789 1121,789 1122,798 1092,798','#2c2e30')}${pg('1097,794 1118,794 1119,797 1097,797','#8a8d90')}${pg('1076,804 1081,806 1082,826 1077,825','#d5d7d8')}</g>
${ln('M766 905h397','#9c8d84',1)}</svg>`;
define('pan-pad', `:host{display:grid;grid-template-columns:1fr 1fr;gap:2px;width:66px;height:66px;transform:rotate(45deg);background:#dfe2e6;border-radius:12px;box-shadow:9px 4px 14px #1b2b4226;color:#8b95a3}
button{display:flex;align-items:center;justify-content:center;background:#fff}button ui-icon{transform:rotate(-45deg)}button:nth-of-type(1){border-radius:12px 0 0 0}button:nth-of-type(2){border-radius:0 12px 0 0}button:nth-of-type(3){border-radius:0 0 0 12px}button:nth-of-type(4){border-radius:0 0 12px 0}`,
  () => ['up','right','left','down'].map(n=>`<button aria-label="Pan ${n}">${ic(n,18)}</button>`).join(''));
define('scene-view', `:host{display:block;position:relative;min-height:0;overflow:hidden;background:linear-gradient(#fbfdfc,#feffff 30%,#fff)}svg{display:block;width:100%;height:100%}pan-pad{position:absolute;left:34px;top:30px}`,
  () => `${scene()}<pan-pad></pan-pad>`);

/* ---- wall shapes ---- */
const SHAPES = {
  square:[[28,28],[116,28],[116,116],[28,116]], tee:[[23,28],[121,28],[121,62],[90,62],[90,114],[52,114],[52,62],[23,62]],
  ell:[[28,28],[75,28],[75,77],[115,77],[115,114],[28,114]], corner:[[28,28],[82,28],[82,62],[116,62],[116,116],[28,116]],
  alcove:[[48,28],[95,28],[95,49],[116,49],[116,116],[28,116],[28,49],[48,49]], notch:[[28,28],[116,28],[116,54],[96,54],[96,88],[116,88],[116,116],[28,116]],
  cut:[[28,28],[91,28],[115,54],[115,115],[28,115]], zed:[[28,28],[89,28],[89,53],[116,53],[116,116],[55,116],[55,90],[28,90]]
};
const inset = (pts, d) => pts.map((p, i) => {
  const a = pts[(i + pts.length - 1) % pts.length], b = pts[(i + 1) % pts.length];
  const n = (u, v) => { const x = v[0]-u[0], y = v[1]-u[1], l = Math.hypot(x, y); return [-y/l, x/l]; };
  const m = n(a, p), k = n(p, b), q = 1 + m[0]*k[0] + m[1]*k[1];
  return [+(p[0] + d*(m[0]+k[0])/q).toFixed(2), +(p[1] + d*(m[1]+k[1])/q).toFixed(2)];
});
define('shape-card', `:host{display:block}button{display:block;width:100%;border:2px solid #e5e6e8;border-radius:5px;background:#fff}svg{display:block;width:100%}`, el => {
  const k = el.getAttribute('shape'), o = SHAPES[k];
  let g = `<path d="M28.500 69.500h87v5h-87z" fill="#d6d6d6" stroke="#aaa"/>`;
  if (o) { const n = inset(o, 6); g = `<g transform="translate(.7 .7) scale(.99)"><polygon points="${o}" fill="#d6d6d6" stroke="#a0a0a0" stroke-width="1.300"/><polygon points="${n}" fill="${k=='square'?'#fff':'#f7f7f7'}" stroke="#b0b0b0" stroke-width="1.300"/>` + o.map((p,i)=>`<path d="M${p}L${n[i]}" stroke="#a0a0a0" stroke-width="1.600"/>`).join('') + '</g>'; }
  return `<button aria-label="${k}"><svg viewBox="2 2 140 140">${g}</svg></button>`;
});
define('image-card', `:host{display:flex;box-sizing:border-box;align-items:center;height:66px;padding:0 15px 0 8px;border:1px solid #e3e5e8;border-radius:8px;background:#fbfbfc}
.th{width:48px;height:48px;border:1px solid #b9bdc6;border-radius:4px;background:#fff;margin-right:11px}button{display:flex;margin-right:10px}
label{display:flex;align-items:center;gap:8px;margin-left:auto;font:600 13px/18px "Open Sans",sans-serif}
input{appearance:none;-webkit-appearance:none;margin:0;width:26px;height:14px;position:relative}
input::before{content:"";position:absolute;left:0;top:1px;width:24px;height:12px;border:2px solid #aaa;border-radius:6px;box-sizing:border-box;background:#fff}input::after{content:"";position:absolute;right:0;top:0;width:14px;height:14px;box-sizing:border-box;border:2px solid #000;border-radius:50%;background:#6cc3d2}`,
  () => `<svg class="th" viewBox="0 0 48 48"><g fill="none" stroke="#9a9a9a" stroke-width=".8"><path d="M6 4h9v8M15 4v19M2 12h26v12H2zM2 28h37v13H2zM39 23v18M18 28v13M28 14h11M28 18h11" /><path d="M7 4h8v7H7z" stroke-width="1.400"/><path d="M43 4v42M38 2v8M12 13v12M6 14v10M2 44h36M24 42v4M46 20v3" stroke="#bbb" stroke-dasharray="2 1"/><path d="M5 34h8M25 35h4M18 15h8" stroke="#ccc"/></g></svg>
  <button aria-label="Delete image">${ic('trash',22)}</button><button aria-label="Image settings">${ic('gear',22)}</button><label>
  <input type="checkbox" checked>Hide</label>`);
define('walls-panel', `:host{display:block;box-sizing:border-box;padding:23px 8px 0;background:#fff;box-shadow:0 0 14px #0000001f;overflow:hidden}
h2{margin:0 0 19px;font:700 13px/20px "Noto Sans CJK SC","Noto Sans",sans-serif;color:#000}.g{display:grid;grid-template-columns:1fr 1fr;gap:8px;padding:8px 1px 0 0}`,
  () => `<h2>FLOORPLAN IMAGE</h2><image-card></image-card><div class="g">${['square','line','tee','ell','corner','alcove','notch','cut','zed'].map(s=>`<shape-card shape="${s}"></shape-card>`).join('')}</div>`);
define('rail-item', `:host{display:block}button{display:flex;flex-direction:column;align-items:center;width:100%;font-size:11px;line-height:16px;font-weight:500;color:#5a6678}
.b{display:flex;width:38px;height:38px;border-radius:8px;align-items:center;justify-content:center;margin-bottom:2px}
:host([active]) .b{background:#1b2b42;color:#fff}:host([active]) button,:host([learn]) button{color:#1b2b42;font-weight:600}:host([learn]) .b{background:#1cbbbc;width:40px;height:40px}`,
  el => `<button><span class="b">${ic(el.getAttribute('icon'),26)}</span><slot></slot></button>`);
define('tool-rail', `:host{display:flex;box-sizing:border-box;flex-direction:column;gap:13px;padding:16px 0 13px;background:#fff;box-shadow:0 0 36px #0000001a;position:relative}rail-item[learn]{margin-top:auto}`,
  () => `${['Walls','Structures','Products','Cabinets','Objects','Text','Lines'].map((n,i)=>`<rail-item icon="${n.toLowerCase()}" ${i?'':'active'}>${n}</rail-item>`).join('')}<rail-item icon="learn" learn>Learn</rail-item>`);
define('editor-page', `:host{display:flex;flex-direction:column}main{flex:1;min-height:0;display:grid;grid-template-columns:1fr 312px 80px;grid-template-rows:auto 1fr;overflow:hidden}
canvas-toolbar{grid-area:1/1/2/-1}scene-view{grid-area:2/1}walls-panel{grid-area:1/2/-1/3;z-index:2}tool-rail{grid-area:1/3/-1/4;z-index:3}`,
  () => `<tab-strip></tab-strip><address-bar></address-bar><bookmarks-bar></bookmarks-bar><app-header></app-header><main><canvas-toolbar></canvas-toolbar><scene-view></scene-view><walls-panel></walls-panel><tool-rail></tool-rail></main>`);
</script>
</body>
</html>
